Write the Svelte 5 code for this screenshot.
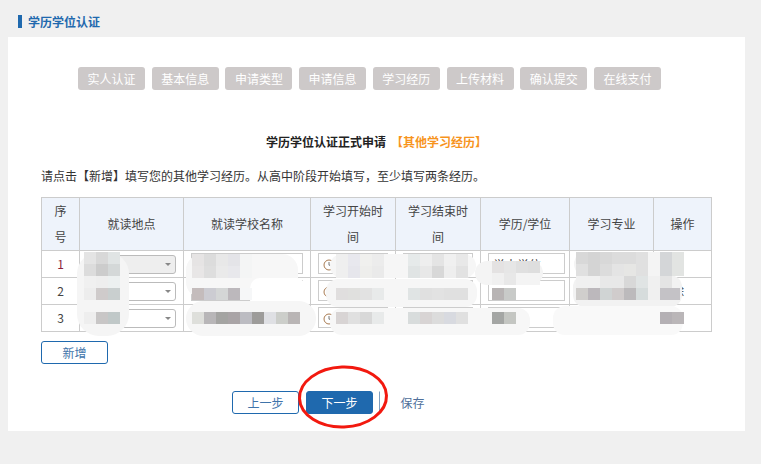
<script>
  const steps = ['实人认证', '基本信息', '申请类型', '申请信息', '学习经历', '上传材料', '确认提交', '在线支付'];
  const rows = [
    { no: 1, degree: '学士学位', op: '', locked: true },
    { no: 2, degree: '', op: '删除', locked: false },
    { no: 3, degree: '', op: '', locked: false }
  ];

  // the privacy smudges on the screenshot, page coords: x, y, w, h, radius, colour
  const smears = [
    [77, 252, 52, 84, 22, 'f5f5f5'],
    [186, 254, 112, 44, 16, 'f7f7f7'],
    [250, 278, 56, 32, 10, 'ffffff'],
    [186, 301, 130, 35, 18, 'f6f6f6'],
    [330, 254, 146, 24, 12, 'f6f6f6'],
    [326, 279, 151, 28, 12, 'f6f6f6'],
    [330, 308, 200, 27, 12, 'f7f7f7'],
    [475, 261, 68, 24, 12, 'f4f4f4'],
    [574, 252, 110, 24, 12, 'f4f4f4'],
    [573, 275, 109, 32, 12, 'f2f2f2'],
    [553, 306, 130, 29, 12, 'f9f9f9']
  ];
  const tile = 12;
  // x, y, colours, tile width
  const mosaics = [
    [84, 252, ['e4e4e4', 'd8d8d8', 'e0e4e4']],
    [84, 264, ['dcdcdc', 'cccccc', 'd4d8d8']],
    [84, 276, ['f0f0f0', 'eeeeee', 'ecf0f0']],
    [84, 288, ['ededed', 'cfcbcb', 'c9cfcf']],
    [84, 312, ['eeeeee', 'c8c6c6', 'c0c8c8']],
    [192, 254, ['e6e4e4', 'dcdcdc', 'e8e8e8', 'e4e4e8', 'f4f5f5']],
    [192, 266, ['e8e6e6', 'dedede', 'eaeaea', 'e8e8ec', 'f4f5f5']],
    [192, 288, ['c4bcbc', 'ccccd2', 'd4d6d6', 'bcb8bc', 'f6f7f8']],
    [192, 312, ['dedfdb', 'b8b6b8', 'a4a4a2', 'a9a4a6', 'bcbcc2', '9d9c9a', 'dfe0e4', 'ccceca', 'b9b5b5']],
    [336, 254, ['efefef', 'e8e8ee', 'f0f0ee', 'ececec']],
    [336, 266, ['efefef', 'e6e6ec', 'eeeeec', 'eaeaea']],
    [408, 254, ['e6eaea', 'eeeeee', 'e4e4e4', 'f0f0f0', 'e8e8e8']],
    [408, 266, ['e0e4e4', 'e8e8e8', 'd8d8d8', 'eeeeee', 'e2e2e2']],
    [336, 288, ['e0dede', 'e0e0de', 'e2e2e2', 'e8eaea']],
    [408, 288, ['e0e4e4', 'e0e0e0', 'e2e2e2', 'e0e0e0', 'e0e0e0']],
    [336, 312, ['d8d4d4', 'e0e0e0', 'd8d8d8', 'e8eaea']],
    [408, 312, ['d8dcdc', 'd8d4d4', 'dcdcdc', 'd8dae0', 'e0e0e0']],
    [492, 261, ['e4e2e2', 'e6e6e6', 'e0e0e0', 'dedede']],
    [492, 273, ['f0f0f0', 'e8e8e8', 'f4f4f4', 'f4f4f4']],
    [492, 288, ['b8b4b4', 'c8cac8']],
    [492, 312, ['a4a6a4', 'c4c6c2']],
    [576, 252, ['d8d8d8', 'd4d4d4', 'd8d8d8', 'dcdcdc', 'dcdcdc', 'e0e0e0', 'f4f4f4', 'd4d6d8', 'e2e4e2']],
    [576, 264, ['e0e0e0', 'd4d4d4', 'dcdcdc', 'e4e4e4', 'e6e6e4', 'e0e0e0', 'f4f4f4', 'd4d6d8', 'e2e4e2']],
    [576, 276, ['f0f0f0', 'f0f0f0', 'e8e8e8', 'e8e8e8', 'd8d8d8', 'e0e4e4', 'f0f0f0', 'e4e4e4']],
    [576, 288, ['d0cecc', 'bcb8bc', 'd0d4d4', 'd0cccc', 'bcbabc', 'd6dcdc', 'f0f0f0']],
    [660, 288, ['c4c2c6', 'c4c2c6'], 10],
    [660, 312, ['b4b0b4', 'bab6b8']]
  ];
  // table sits at 41,197 on the page
  const ox = 41;
  const oy = 197;
</script>

<div class="page">
  <h1 class="title"><span class="bar"></span>学历学位认证</h1>

  <div class="card">
    <div class="steps">
      {#each steps as s}
        <div class="step">{s}</div>
      {/each}
    </div>

    <h2 class="heading">学历学位认证正式申请<span class="accent">【其他学习经历】</span></h2>
    <p class="hint">请点击【新增】填写您的其他学习经历。从高中阶段开始填写，至少填写两条经历。</p>

    <div class="table-wrap">
      <table>
        <colgroup>
          <col style="width:38px" />
          <col style="width:104px" />
          <col style="width:127px" />
          <col style="width:85px" />
          <col style="width:85px" />
          <col style="width:89px" />
          <col style="width:84px" />
          <col style="width:58px" />
        </colgroup>
        <thead>
          <tr>
            <th>序号</th>
            <th>就读地点</th>
            <th>就读学校名称</th>
            <th>学习开始时间</th>
            <th>学习结束时间</th>
            <th>学历/学位</th>
            <th>学习专业</th>
            <th>操作</th>
          </tr>
        </thead>
        <tbody>
          {#each rows as r}
            <tr>
              <td>{r.no}</td>
              <td>
                <div class="select" class:locked={r.locked}><span class="caret"></span></div>
              </td>
              <td><div class="field"></div></td>
              <td>
                <div class="field date">
                  <svg width="12" height="12" viewBox="0 0 12 12" fill="none" stroke="#777" stroke-width="1">
                    <circle cx="6" cy="6" r="5" stroke="#a87a50" />
                    <path d="M6 3v3.2h2.4" />
                  </svg>
                </div>
              </td>
              <td><div class="field date"></div></td>
              <td class="degree"><div class="field">{r.degree}</div></td>
              <td><div class="field"></div></td>
              <td class="op">{r.op}</td>
            </tr>
          {/each}
        </tbody>
      </table>

      {#each smears as [x, y, w, h, rad, color]}
        <div class="smear" style="left:{x - ox}px;top:{y - oy}px;width:{w}px;height:{h}px;border-radius:{rad}px;background:#{color}"></div>
      {/each}
      {#each mosaics as [x, y, colors, w = tile]}
        {#each colors as c, i}
          <div class="tile" style="left:{x - ox + i * w}px;top:{y - oy}px;width:{w}px;background:#{c}"></div>
        {/each}
      {/each}
    </div>

    <button class="btn add">新增</button>

    <div class="actions">
      <button class="btn">上一步</button>
      <div class="next-wrap">
        <button class="btn primary">下一步</button>
        <svg class="circle" width="96" height="68" viewBox="0 0 96 68" fill="none">
          <ellipse cx="48" cy="34" rx="43.5" ry="30" stroke="#f2190f" stroke-width="3" transform="rotate(-2 48 34)" />
        </svg>
      </div>
      <button class="btn save">保存</button>
    </div>
  </div>
</div>

<style>
  :global(body) {
    background: #f0f0f0;
    font-family: "Noto Sans CJK SC", "Liberation Sans", sans-serif;
    font-size: 12px;
    color: #333;
  }

  .page {
    height: 464px;
    overflow: hidden;
    padding: 0 16px 0 8px;
    box-sizing: border-box;
  }

  .title {
    display: flex;
    align-items: center;
    gap: 6px;
    height: 37px;
    margin: 0;
    padding: 6px 0 0 10px;
    box-sizing: border-box;
    font-size: 12px;
    font-weight: 700;
    color: #1f69ae;
  }

  .bar {
    width: 4px;
    height: 13px;
    background: #1f69ae;
  }

  .card {
    height: 394px;
    background: #fff;
    padding: 30px 0 0 33px;
    box-sizing: border-box;
  }

  .steps {
    display: flex;
    gap: 6.71px;
    padding-left: 37px;
  }

  .step {
    width: 67px;
    height: 23px;
    line-height: 23px;
    text-align: center;
    background: #cdc9c9;
    color: #fff;
    border-radius: 3px;
  }

  .heading {
    margin: 43px 0 0;
    padding-left: 225px;
    font-size: 12px;
    line-height: 18px;
    font-weight: 700;
    color: #222;
  }

  .accent {
    margin-left: 5px;
    color: #f7941d;
  }

  .hint {
    margin: 16px 0 0;
    line-height: 18px;
    color: #333;
  }

  .table-wrap {
    position: relative;
    width: 671px;
    margin-top: 12px;
  }

  table {
    width: 670px;
    table-layout: fixed;
    border-collapse: collapse;
  }

  th, td {
    border: 1px solid #ccc;
    text-align: center;
    font-weight: 400;
    color: #444;
  }

  th {
    height: 52px;
    padding: 0 8px;
    line-height: 26px;
    background: #eef3fb;
  }

  td {
    height: 26px;
    padding: 0 7px;
    line-height: 16px;
  }

  tbody tr:first-child td:first-child {
    color: #8a1f3c;
  }

  .degree {
    padding-right: 4px;
  }

  .op {
    padding-left: 6px;
    text-align: left;
  }

  .select {
    position: relative;
    height: 17px;
    margin: 0 0 0 -2px;
    border: 1px solid #bbb;
    border-radius: 3px;
    background: #fff;
  }

  .locked {
    background: #eee;
  }

  .caret {
    position: absolute;
    right: 4px;
    top: 7px;
    border: 3px solid transparent;
    border-top: 3px solid #888;
    border-bottom: 0;
  }

  .field {
    display: flex;
    align-items: center;
    height: 15px;
    margin-bottom: 2px;
    padding: 4px 0 0 4px;
    border: 1px solid #ccc;
    background: #fff;
    font-size: 12px;
    white-space: nowrap;
    overflow: hidden;
  }

  .smear {
    position: absolute;
  }

  .tile {
    position: absolute;
    height: 12px;
  }

  .btn {
    display: block;
    width: 67px;
    height: 23px;
    padding: 0;
    border: 1px solid #1f69ae;
    border-radius: 3px;
    background: #fff;
    color: #3f74aa;
    font: inherit;
  }

  .add {
    margin-top: 9px;
  }

  .actions {
    display: flex;
    gap: 7px;
    margin-top: 27px;
    padding-left: 191px;
  }

  .next-wrap {
    position: relative;
  }

  .primary {
    background: #1f69ae;
    color: #fff;
  }

  .circle {
    position: absolute;
    left: -11px;
    top: -28px;
    pointer-events: none;
  }

  .save {
    margin-left: -1px;
    border-color: transparent transparent transparent #7f9fc0;
    border-radius: 0;
    color: #4f6f9a;
  }
</style>
